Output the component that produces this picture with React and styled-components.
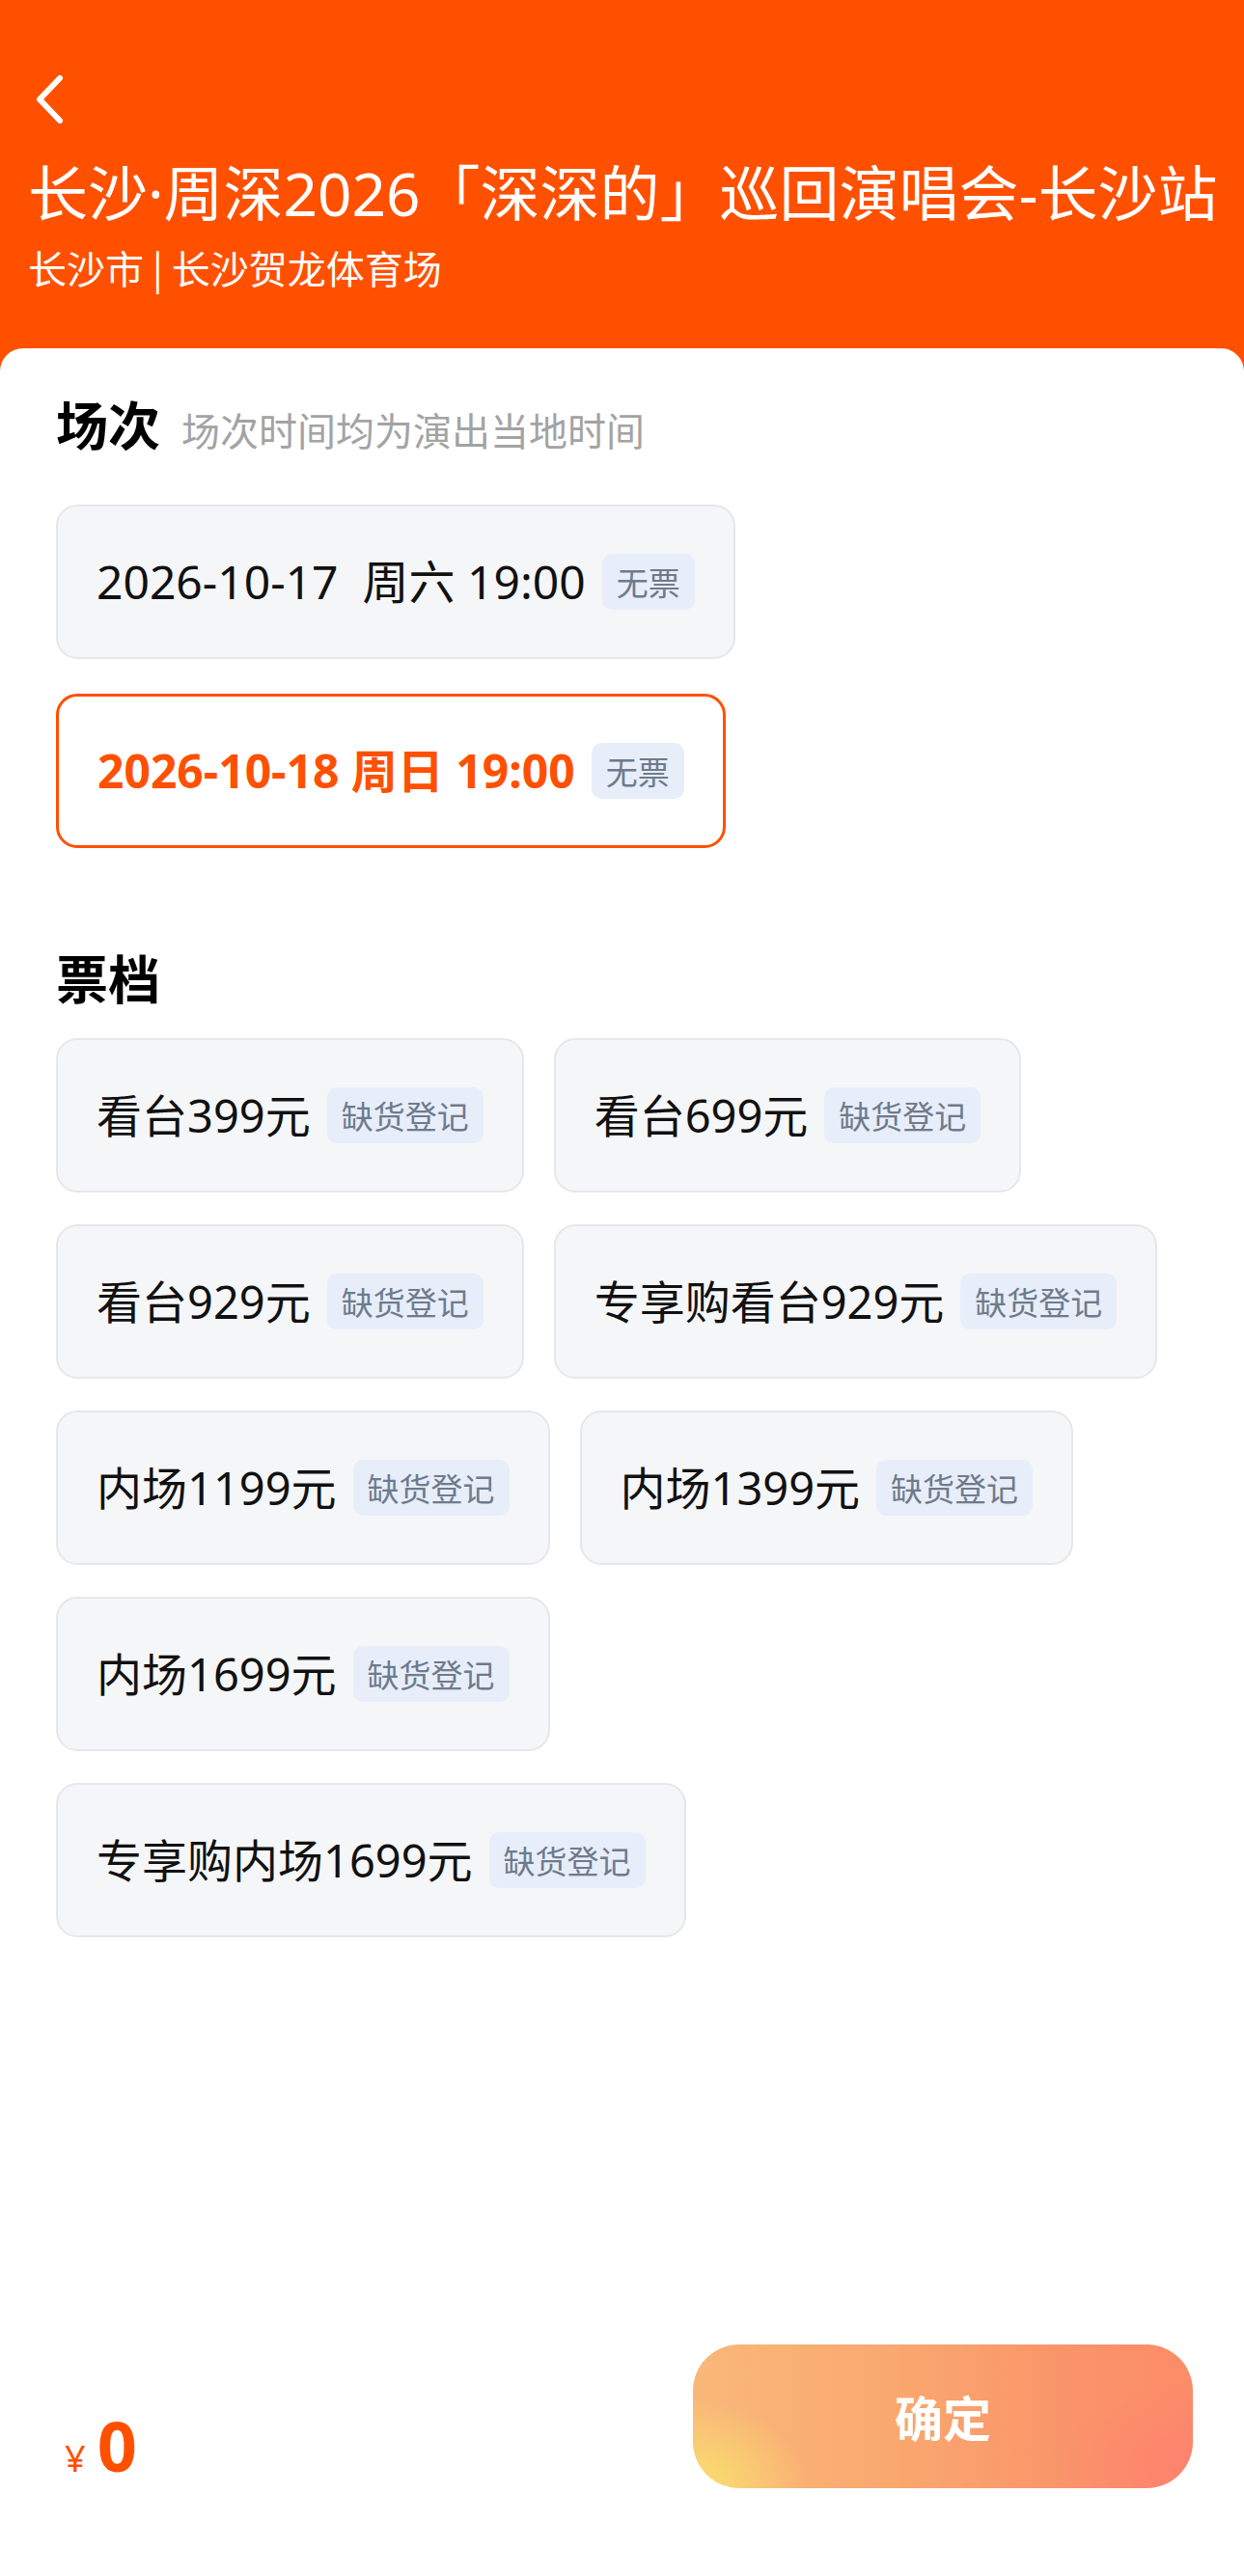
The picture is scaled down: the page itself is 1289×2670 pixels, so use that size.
import React from 'react'
import styled, { createGlobalStyle } from 'styled-components'

const GlobalStyle = createGlobalStyle`
  html, body {
    margin: 0;
    padding: 0;
    background: #ffffff;
  }
  body {
    font-family: "Noto Sans", "Noto Sans CJK SC", sans-serif;
    -webkit-font-smoothing: antialiased;
  }
`

const Page = styled.div`
  min-height: 100vh;
  display: flex;
  flex-direction: column;
  background: #ffffff;
`

const Header = styled.div`
  background: #ff5000;
  color: #ffffff;
  padding: 78px 29px 82px;
  display: flex;
  flex-direction: column;
`

const BackButton = styled.svg`
  display: block;
  width: 34px;
  height: 50px;
  margin-left: 6px;
`

const Title = styled.h1`
  margin: 33px 0 0;
  font-size: 62px;
  line-height: 78px;
  font-weight: 400;
  white-space: nowrap;
`

const Subtitle = styled.div`
  margin-top: 12px;
  font-family: "Noto Sans CJK SC", sans-serif;
  font-size: 40px;
  line-height: 52px;
  white-space: nowrap;
`

const Panel = styled.div`
  flex: 1;
  margin-top: -24px;
  background: #ffffff;
  border-radius: 24px 24px 0 0;
  padding: 48px 58px 0;
`

const SectionHead = styled.div`
  display: flex;
  align-items: baseline;
  gap: 22px;
  margin-top: ${({ top }) => top || 0}px;
`

const SectionTitle = styled.div`
  font-size: 54px;
  line-height: 64px;
  font-weight: 700;
  color: #000000;
`

const SectionNote = styled.div`
  font-size: 40px;
  line-height: 52px;
  color: #a3a3a3;
`

const SessionList = styled.div`
  display: flex;
  flex-direction: column;
  align-items: flex-start;
  gap: 36px;
  margin-top: 50px;
`

const OptionCard = styled.div`
  box-sizing: border-box;
  height: 160px;
  display: flex;
  align-items: center;
  gap: 17px;
  padding: 0 40px;
  border-radius: 22px;
  background: ${({ active }) => (active ? '#ffffff' : '#f5f6f8')};
  border: ${({ active }) => (active ? '3px solid #ff5000' : '2px solid #e6e7ea')};
`

const OptionText = styled.span`
  font-size: ${({ size }) => size || 47}px;
  line-height: 60px;
  white-space: pre;
  font-weight: ${({ active }) => (active ? 700 : 400)};
  color: ${({ active }) => (active ? '#ff5000' : '#111111')};
`

const Badge = styled.span`
  display: inline-flex;
  align-items: center;
  height: 58px;
  padding: 0 15px;
  border-radius: 10px;
  background: #e7eef9;
  color: #6f7a8c;
  font-size: 33px;
  white-space: nowrap;
`

const TicketGrid = styled.div`
  display: flex;
  flex-wrap: wrap;
  gap: 33px 31px;
  margin-top: 29px;
`

const BottomBar = styled.div`
  display: flex;
  align-items: flex-end;
  justify-content: space-between;
  padding: 0 53px 91px 67px;
`

const Price = styled.div`
  display: flex;
  align-items: baseline;
  gap: 12px;
  color: #ff5000;
  padding-bottom: 9px;
`

const Yen = styled.span`
  font-size: 38px;
  line-height: 1;
`

const Amount = styled.span`
  font-size: 72px;
  line-height: 72px;
  font-weight: 700;
`

const ConfirmButton = styled.button`
  width: 518px;
  height: 149px;
  border: none;
  border-radius: 48px;
  color: #ffffff;
  font-family: inherit;
  font-size: 50px;
  font-weight: 700;
  background:
    radial-gradient(ellipse 120px 90px at 0% 100%, rgba(250, 228, 110, 0.95), rgba(250, 228, 110, 0) 100%),
    radial-gradient(ellipse 140px 90px at 100% 85%, rgba(255, 128, 112, 0.8), rgba(255, 128, 112, 0) 100%),
    linear-gradient(90deg, #f9b879 0%, #f9a86f 40%, #fa946a 75%, #fb8c68 100%);
`

const sessions = [
  { label: '2026-10-17  周六 19:00', status: '无票', active: false },
  { label: '2026-10-18 周日 19:00', status: '无票', active: true },
]

const tickets = [
  '看台399元',
  '看台699元',
  '看台929元',
  '专享购看台929元',
  '内场1199元',
  '内场1399元',
  '内场1699元',
  '专享购内场1699元',
]

const App = () => {
  return (
    <Page>
      <GlobalStyle />
      <Header>
        <BackButton viewBox="0 0 34 50" fill="none">
          <path d="M27 3 L6 25 L27 47" stroke="#ffffff" strokeWidth="6" strokeLinecap="round" strokeLinejoin="round" />
        </BackButton>
        <Title>长沙·周深2026「深深的」巡回演唱会-长沙站</Title>
        <Subtitle>长沙市 | 长沙贺龙体育场</Subtitle>
      </Header>

      <Panel>
        <SectionHead>
          <SectionTitle>场次</SectionTitle>
          <SectionNote>场次时间均为演出当地时间</SectionNote>
        </SectionHead>
        <SessionList>
          {sessions.map((s) => (
            <OptionCard key={s.label} active={s.active}>
              <OptionText size={48} active={s.active}>{s.label}</OptionText>
              <Badge>{s.status}</Badge>
            </OptionCard>
          ))}
        </SessionList>

        <SectionHead top={104}>
          <SectionTitle>票档</SectionTitle>
        </SectionHead>
        <TicketGrid>
          {tickets.map((t) => (
            <OptionCard key={t}>
              <OptionText>{t}</OptionText>
              <Badge>缺货登记</Badge>
            </OptionCard>
          ))}
        </TicketGrid>
      </Panel>

      <BottomBar>
        <Price>
          <Yen>¥</Yen>
          <Amount>0</Amount>
        </Price>
        <ConfirmButton>确定</ConfirmButton>
      </BottomBar>
    </Page>
  )
}

export default App
